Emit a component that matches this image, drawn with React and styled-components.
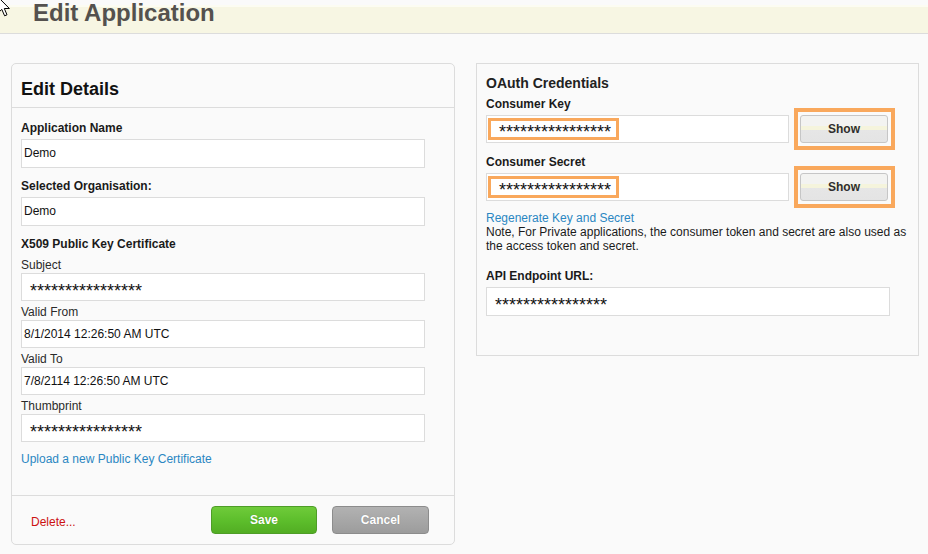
import styled, { createGlobalStyle } from "styled-components";

const GlobalStyle = createGlobalStyle`
  html, body {
    margin: 0;
    padding: 0;
    background: #fafafa;
    font-family: "Liberation Sans", Arial, sans-serif;
    font-size: 12px;
    color: #222;
  }
`;

const Page = styled.div`
  position: relative;
  width: 928px;
  height: 554px;
  overflow: hidden;
`;

const Cursor = styled.svg`
  position: absolute;
  left: -3px;
  top: -4px;
`;

const Header = styled.div`
  height: 33px;
  border-bottom: 1px solid #dcdcdc;
  background: linear-gradient(
    to bottom,
    #fafafa 0,
    #fafafa 5px,
    #fcfcf2 5px,
    #fcfcf2 7px,
    #f7f6e3 7px
  );
  padding-left: 33px;
`;

const Title = styled.h1`
  margin: 0;
  padding-top: 1px;
  font-size: 24px;
  line-height: 24px;
  font-weight: bold;
  color: #54514e;
`;

const Content = styled.div`
  display: flex;
  align-items: flex-start;
  gap: 21px;
  padding: 29px 9px 0 11px;
`;

const Panel = styled.div`
  width: ${(p) => p.$width}px;
  box-sizing: border-box;
  border: 1px solid #dcdcdc;
  border-radius: ${(p) => (p.$rounded ? "5px" : "0")};
  background: #fafafa;
`;

const PanelHeader = styled.div`
  height: 44px;
  box-sizing: border-box;
  padding: 15px 9px 0;
  border-bottom: 1px solid #dcdcdc;
  font-size: 18px;
  line-height: 20px;
  font-weight: bold;
  color: #111;
`;

const PanelBody = styled.div`
  padding: ${(p) => p.$padding};
`;

const Group = styled.div`
  margin-bottom: ${(p) => p.$gap || 0}px;
`;

const Label = styled.div`
  line-height: 15px;
  font-weight: ${(p) => (p.$bold ? "bold" : "normal")};
  color: ${(p) => (p.$bold ? "#1a1a1a" : "#2a2a2a")};
  margin-bottom: ${(p) => p.$gap || 0}px;
  margin-top: ${(p) => p.$top || 0}px;
`;

const SectionTitle = styled.div`
  font-size: 14px;
  line-height: 17px;
  font-weight: bold;
  color: #222;
`;

const Field = styled.div`
  width: ${(p) => p.$width}px;
  height: ${(p) => p.$height || 29}px;
  box-sizing: border-box;
  border: 1px solid #dcdcdc;
  background: #fff;
  padding: ${(p) => (p.$masked ? "8px 8px 0" : "0 2px")};
  font-size: ${(p) => (p.$masked ? "18px" : "12px")};
  line-height: ${(p) => (p.$masked ? "18px" : `${(p.$height || 29) - 2}px`)};
  color: #111;
  white-space: nowrap;
  overflow: hidden;
`;

const KeyField = styled.div`
  width: 303px;
  height: 28px;
  box-sizing: border-box;
  border: 1px solid #dcdcdc;
  background: #fff;
  display: flex;
  align-items: center;
  padding-left: 1px;
`;

const Highlight = styled.span`
  height: 22px;
  box-sizing: border-box;
  border: 3px solid #f9a85c;
  padding: 6px 5px 0 8px;
  font-size: 18px;
  line-height: 10px;
  color: #111;
`;

const Row = styled.div`
  display: flex;
  align-items: center;
  gap: 11px;
`;

const ShowButton = styled.button`
  position: relative;
  width: 88px;
  height: 28px;
  border: 1px solid #c6c6c6;
  border-radius: 3px;
  background: linear-gradient(
    to bottom,
    #f3f3f1 0,
    #f3f3f1 38%,
    #f5f4dc 38%,
    #f5f4dc 52%,
    #e6e6e6 52%,
    #e4e4e4 100%
  );
  font-family: inherit;
  font-size: 12px;
  font-weight: bold;
  color: #2e2e2e;
  padding: 0;

  &::after {
    content: "";
    position: absolute;
    left: -7px;
    top: -8px;
    right: -8px;
    bottom: -8px;
    border: 4px solid #f9a85c;
  }
`;

const Link = styled.a`
  display: block;
  color: #2a87c2;
  text-decoration: none;
  line-height: ${(p) => p.$lh || 15}px;
  margin-top: ${(p) => p.$top || 0}px;
`;

const Note = styled.div`
  line-height: 14px;
  color: #1a1a1a;
`;

const Footer = styled.div`
  display: flex;
  align-items: center;
  border-top: 1px solid #dcdcdc;
  padding: 10px 25px 10px 19px;
`;

const DeleteLink = styled.a`
  color: #cc1111;
  margin-top: 4px;
  text-decoration: none;
  flex: 1;
`;

const ActionButton = styled.button`
  width: ${(p) => p.$width}px;
  height: 28px;
  margin-left: ${(p) => p.$gap || 0}px;
  border-radius: 4px;
  border: 1px solid ${(p) => (p.$primary ? "#4e9d27" : "#8c8c8c")};
  background: ${(p) =>
    p.$primary
      ? "linear-gradient(to bottom, #6fcb3a 0, #5cbd2b 55%, #52ad23 100%)"
      : "linear-gradient(to bottom, #b2b2b2 0, #a6a6a6 55%, #9c9c9c 100%)"};
  color: #fff;
  font-family: inherit;
  font-size: 12px;
  font-weight: bold;
  text-shadow: 0 0 1px rgba(0, 0, 0, 0.25);
  padding: 0;
`;

const STARS = "****************";

export default function App() {
  return (
    <Page>
      <GlobalStyle />
      <Header>
        <Title>Edit Application</Title>
      </Header>
      <Content>
        <Panel $width={444} $rounded>
          <PanelHeader>Edit Details</PanelHeader>
          <PanelBody $padding="13px 9px 28px">
            <Group $gap={11}>
              <Label $bold $gap={3}>Application Name</Label>
              <Field $width={404}>Demo</Field>
            </Group>
            <Group $gap={11}>
              <Label $bold $gap={3}>Selected Organisation:</Label>
              <Field $width={404}>Demo</Field>
            </Group>
            <Label $bold $gap={6}>X509 Public Key Certificate</Label>
            <Group $gap={4}>
              <Label>Subject</Label>
              <Field $width={404} $height={28} $masked>{STARS}</Field>
            </Group>
            <Group $gap={4}>
              <Label>Valid From</Label>
              <Field $width={404} $height={28}>8/1/2014 12:26:50 AM UTC</Field>
            </Group>
            <Group $gap={4}>
              <Label>Valid To</Label>
              <Field $width={404} $height={28}>7/8/2114 12:26:50 AM UTC</Field>
            </Group>
            <Group>
              <Label>Thumbprint</Label>
              <Field $width={404} $height={28} $masked>{STARS}</Field>
            </Group>
            <Link href="#" $top={10}>Upload a new Public Key Certificate</Link>
          </PanelBody>
          <Footer>
            <DeleteLink href="#">Delete...</DeleteLink>
            <ActionButton $primary $width={106}>Save</ActionButton>
            <ActionButton $width={97} $gap={15}>Cancel</ActionButton>
          </Footer>
        </Panel>

        <Panel $width={443}>
          <PanelBody $padding="11px 9px 39px">
            <SectionTitle>OAuth Credentials</SectionTitle>
            <Group $gap={12}>
              <Label $bold $top={5} $gap={3}>Consumer Key</Label>
              <Row>
                <KeyField>
                  <Highlight>{STARS}</Highlight>
                </KeyField>
                <ShowButton>Show</ShowButton>
              </Row>
            </Group>
            <Group>
              <Label $bold $gap={3}>Consumer Secret</Label>
              <Row>
                <KeyField>
                  <Highlight>{STARS}</Highlight>
                </KeyField>
                <ShowButton>Show</ShowButton>
              </Row>
            </Group>
            <Link href="#" $top={10} $lh={14}>Regenerate Key and Secret</Link>
            <Note>
              Note, For Private applications, the consumer token and secret are also used as
              the access token and secret.
            </Note>
            <Label $bold $top={16} $gap={3}>API Endpoint URL:</Label>
            <Field $width={404} $masked>{STARS}</Field>
          </PanelBody>
        </Panel>
      </Content>
      <Cursor width="14" height="22" viewBox="0 0 14 22">
        <path
          d="M1 1 L1 17 L4.8 13.4 L7.6 19.8 L10 18.8 L7.3 12.5 L12.4 12.5 Z"
          fill="#fff"
          stroke="#000"
          strokeWidth="1"
          strokeLinejoin="miter"
        />
      </Cursor>
    </Page>
  );
}
